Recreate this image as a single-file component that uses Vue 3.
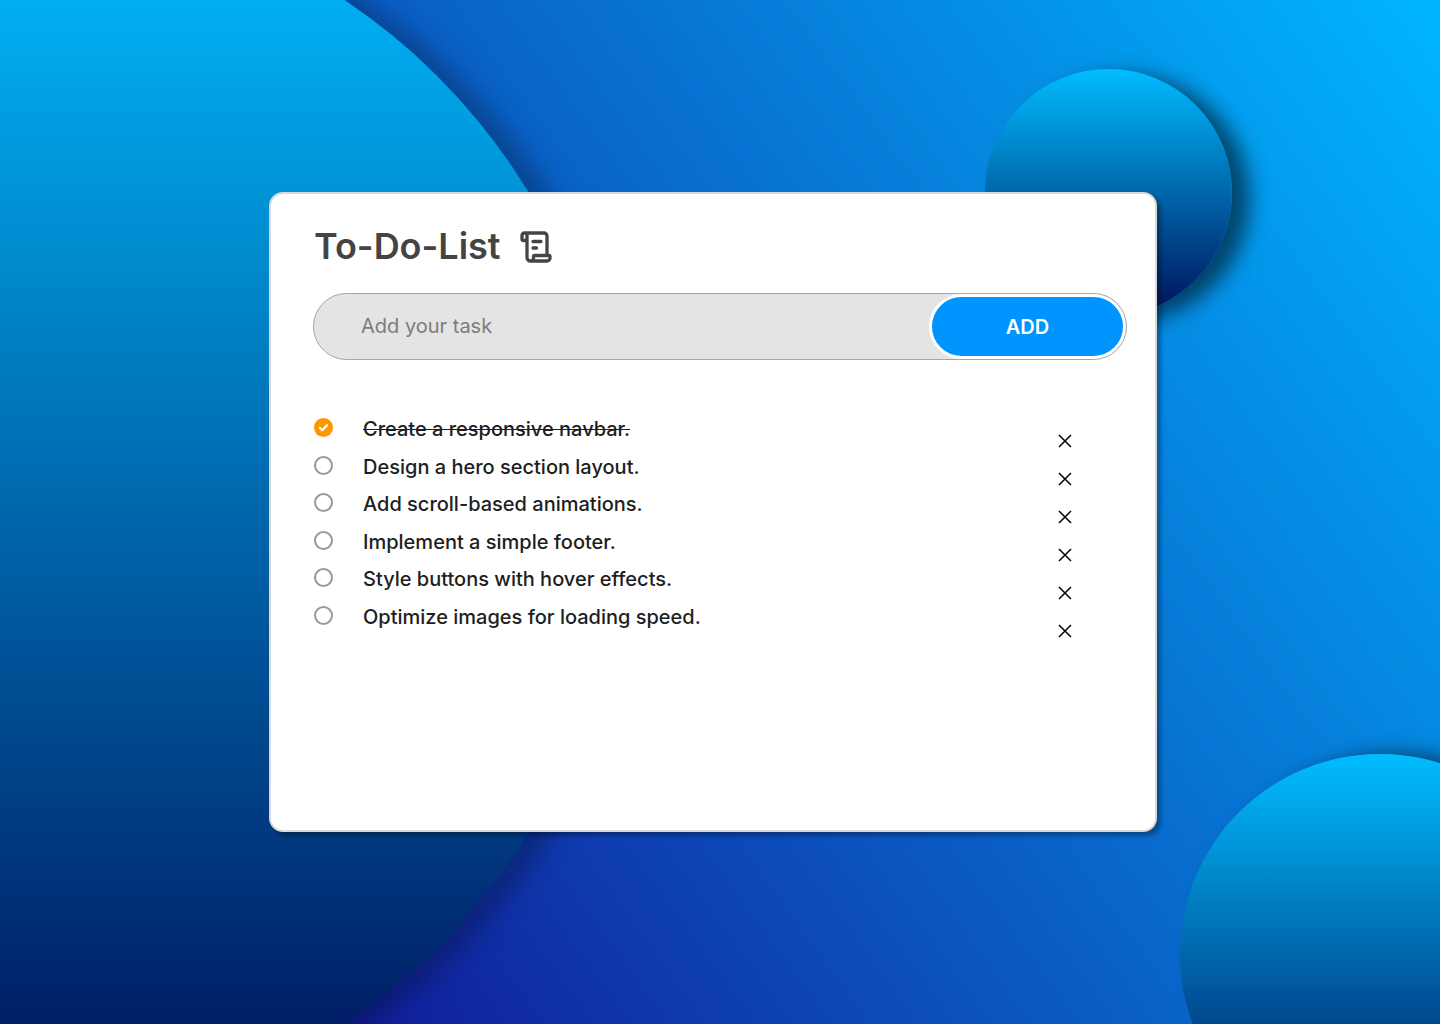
<script setup>
import { ref } from 'vue'

const draft = ref('')
const tasks = ref([
  { id: 1, text: 'Create a responsive navbar.', done: true },
  { id: 2, text: 'Design a hero section layout.', done: false },
  { id: 3, text: 'Add scroll-based animations.', done: false },
  { id: 4, text: 'Implement a simple footer.', done: false },
  { id: 5, text: 'Style buttons with hover effects.', done: false },
  { id: 6, text: 'Optimize images for loading speed.', done: false },
])

function addTask() {
  const text = draft.value.trim()
  if (!text) return
  tasks.value.push({ id: Date.now(), text, done: false })
  draft.value = ''
}

function removeTask(id) {
  tasks.value = tasks.value.filter((task) => task.id !== id)
}
</script>

<template>
  <div class="page">
    <div class="orb orb-left"></div>
    <div class="orb orb-top"></div>
    <div class="orb orb-bottom"></div>

    <main class="card">
      <header class="heading">
        <h1>To-Do-List</h1>
        <svg class="scroll" viewBox="0 -1 32 32" stroke-width="3.3" aria-hidden="true">
          <path d="M7 9.5H3.5a1.5 1.5 0 0 1-1.5-1.5V4.5a2.5 2.5 0 0 1 2.5-2.5M7 2V26.5a3.5 3.5 0 0 0 3.500 3.5H27a3 3 0 0 0 3-3v-1.5a1 1 0 0 0-1-1H14.500a1 1 0 0 0-1 1V27a3 3 0 0 1-3 3M4.5 2H24a3 3 0 0 1 3 3v19M13 10.5h8M13 17h3.5" />
        </svg>
      </header>

      <form class="entry" @submit.prevent="addTask">
        <input v-model="draft" type="text" placeholder="Add your task" aria-label="Add your task" />
        <button type="submit">ADD</button>
      </form>

      <section class="board">
        <ul class="tasks">
          <li v-for="task in tasks" :key="task.id">
            <input :id="'task-' + task.id" v-model="task.done" type="checkbox" />
            <label :for="'task-' + task.id" :class="{ done: task.done }">{{ task.text }}</label>
          </li>
        </ul>
        <ul class="removals">
          <li v-for="task in tasks" :key="task.id">
            <button type="button" :aria-label="'Remove ' + task.text" @click="removeTask(task.id)">
              <svg viewBox="0 0 14 14" stroke-width="1.5" aria-hidden="true"><path d="M1 1l12 12M13 1L1 13" /></svg>
            </button>
          </li>
        </ul>
      </section>
    </main>
  </div>
</template>

<style>
body {
  margin: 0;
}
</style>

<style scoped>
.page {
  position: relative;
  display: flex;
  align-items: center;
  justify-content: center;
  box-sizing: border-box;
  min-height: 100vh;
  padding: 32px 14px 32px 0;
  overflow: hidden;
  background: linear-gradient(54deg, #150088, #00b6ff);
  font-family: Inter, "Liberation Sans", sans-serif;
}

.orb {
  position: absolute;
  border-radius: 50%;
  background: linear-gradient(#00bdff, #001058);
}

.orb-left {
  top: 50%;
  left: -614px;
  width: 1232px;
  height: 1232px;
  margin-top: -616px;
  box-shadow: 24px 2px 24px rgba(0, 0, 0, 0.25);
}

.orb-top {
  top: 69px;
  right: 208px;
  width: 247px;
  height: 247px;
  box-shadow: 18px 6px 20px rgba(0, 0, 0, 0.54);
}

.orb-bottom {
  right: -140px;
  bottom: -130px;
  width: 400px;
  height: 400px;
  box-shadow: 18px 0 20px rgba(0, 0, 0, 0.54);
}

.card {
  position: relative;
  box-sizing: border-box;
  width: 100%;
  max-width: 888px;
  min-height: 640px;
  padding: 30px 28px 30px 42px;
  border: 2px solid #d9d9d9;
  border-radius: 14px;
  background: #fff;
  box-shadow: 4px 4px 4px rgba(0, 0, 0, 0.3);
}

.heading {
  display: flex;
  align-items: center;
  gap: 19px;
  padding-left: 1px;
}

h1 {
  margin: 0;
  font-size: 36px;
  font-weight: 600;
  line-height: 44px;
  color: #444;
}

.scroll {
  width: 32px;
  height: 32px;
  overflow: visible;
  fill: none;
  stroke: #444;
  stroke-linecap: round;
  stroke-linejoin: round;
}

.entry {
  display: flex;
  box-sizing: border-box;
  height: 67px;
  margin-top: 25px;
  border: 1px solid #a6a6a6;
  border-radius: 34px;
  background: #e4e4e4;
  overflow: hidden;
}

.entry input {
  flex: 1;
  min-width: 0;
  padding: 0 24px 2px 47px;
  border: 0;
  outline: 0;
  background: transparent;
  font: 400 20px/24px Inter, "Liberation Sans", sans-serif;
  color: #1e1e1e;
}

.entry input::placeholder {
  color: #7d7d7d;
  opacity: 1;
}

.entry button {
  width: 197px;
  border: 3px solid #fff;
  border-radius: 33px;
  background: #0094ff;
  font: 600 20px/24px Inter, "Liberation Sans", sans-serif;
  color: #fff;
  cursor: pointer;
}

.board {
  display: flex;
  align-items: flex-start;
  justify-content: space-between;
  margin-top: 57px;
  padding: 0 52px 0 1px;
}

ul {
  margin: 0;
  padding: 0;
  list-style: none;
}

.tasks {
  display: flex;
  flex-direction: column;
  justify-content: space-between;
  min-height: 212px;
}

.tasks li {
  display: flex;
  align-items: flex-start;
  gap: 30px;
}

.tasks input {
  flex: none;
  width: 19px;
  height: 19px;
  margin: 1px 0 0;
  border: 2px solid #999;
  border-radius: 50%;
  appearance: none;
}

.tasks input:checked {
  border: 0;
  background: #ff9500 url("data:image/svg+xml,%3Csvg xmlns='http://www.w3.org/2000/svg' viewBox='0 0 19 19'%3E%3Cpath d='M5.8 9.8l2.4 2.4 4.8-5' fill='none' stroke='white' stroke-width='2.2' stroke-linecap='round' stroke-linejoin='round'/%3E%3C/svg%3E") center / contain no-repeat;
}

.tasks label {
  font-size: 20px;
  font-weight: 500;
  line-height: 24px;
  color: #1e1e1e;
}

.tasks .done {
  text-decoration: line-through 1px;
}

.removals {
  display: flex;
  flex-direction: column;
  gap: 14px;
  padding-top: 12px;
}

.removals li {
  display: flex;
}

.removals button {
  display: grid;
  place-items: center;
  width: 20px;
  height: 24px;
  padding: 0;
  border: 0;
  background: none;
  cursor: pointer;
}

.removals svg {
  width: 14px;
  height: 14px;
  stroke: #000;
}
</style>
